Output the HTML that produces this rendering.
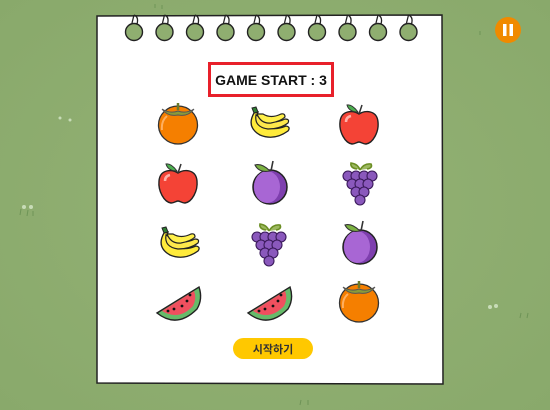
<!DOCTYPE html>
<html><head><meta charset="utf-8"><style>
html,body{margin:0;padding:0;width:550px;height:410px;overflow:hidden;background:#8fae70}
svg{display:block}
</style></head><body>
<svg width="550" height="410" viewBox="0 0 550 410" xmlns="http://www.w3.org/2000/svg">
<defs>
<radialGradient id="bg" cx="0.5" cy="0.5" r="0.7"><stop offset="0" stop-color="#94b275"/><stop offset="1" stop-color="#89a96b"/></radialGradient>
<g id="pers">
 <ellipse cx="0" cy="3" rx="19.5" ry="19" fill="#f57f00" stroke="#333" stroke-width="1.3"/>
 <path d="M-11,-6 q-6,5 -5,14" stroke="#ffb060" stroke-width="2" fill="none"/>
 <path d="M-16,-13 q8,5 16,2 q8,3 16,-2 q-6,8 -16,6 q-10,2 -16,-6z" fill="#8a9a3a" stroke="#555" stroke-width="1"/>
 <path d="M0,-12 v-7" stroke="#6a7a2a" stroke-width="2.5"/>
</g>
<g id="apple">
 <path d="M0,-10 c-6,-4 -18,-4 -19,8 c-1,10 5,21 12,22 c3,0 5,-2 7,-2 c2,0 4,2 7,2 c7,-1 13,-12 12,-22 c-1,-12 -13,-12 -19,-8z" fill="#f44336" stroke="#222" stroke-width="1.4"/>
 <path d="M-13,-2 q0,-5 5,-6" stroke="#ffb0a8" stroke-width="2.5" fill="none"/>
 <path d="M0,-10 l3,-9" stroke="#333" stroke-width="1.5"/>
 <path d="M-1,-12 q-6,-8 -11,-7 q2,7 11,7z" fill="#4caf50" stroke="#333" stroke-width="1"/>
</g>
<g id="banana">
 <path d="M-14,-10 q-8,14 6,22 q14,6 28,-4 q3,-4 -2,-5 q-14,6 -24,-2 q-6,-5 -4,-12z" fill="#ffeb3b" stroke="#222" stroke-width="1.3"/>
 <path d="M-12,-8 q-2,12 12,14 q12,0 20,-6 q2,-4 -3,-4 q-12,6 -22,0 z" fill="#fde74c" stroke="#222" stroke-width="1.2"/>
 <path d="M-11,-9 q4,10 14,9 q10,-2 14,-6 q0,-4 -4,-3 q-10,5 -18,0z" fill="#fff04a" stroke="#222" stroke-width="1.2"/>
 <path d="M-14,-10 l-2,-5 l4,-1 l2,5z" fill="#2e7d32" stroke="#222" stroke-width="1"/>
</g>
<g id="plum">
 <ellipse cx="0" cy="4" rx="17" ry="17" fill="#7e3fae" stroke="#222" stroke-width="1.5"/>
 <ellipse cx="-3" cy="4" rx="13" ry="16" fill="#a866d4"/>
 <path d="M1,-12 l2,-10" stroke="#333" stroke-width="1.6"/>
 <path d="M0,-12 q-8,-8 -15,-6 q4,8 15,6z" fill="#7cb342" stroke="#333" stroke-width="1.1"/>
</g>
<g id="grape">
 <path d="M0,-14 q-2,-6 -9,-7 q-1,5 6,6 M0,-14 q4,-7 11,-6 q2,4 -4,5" stroke="#6b8e23" stroke-width="1.6" fill="#9cb860"/>
 <g fill="#8a58bc" stroke="#3a1a5a" stroke-width="1.1">
 <circle cx="-12" cy="-8" r="5"/><circle cx="-4" cy="-8" r="5"/><circle cx="4" cy="-8" r="5"/><circle cx="12" cy="-8" r="5"/>
 <circle cx="-8" cy="0" r="5"/><circle cx="0" cy="0" r="5"/><circle cx="8" cy="0" r="5"/>
 <circle cx="-4" cy="8" r="5"/><circle cx="4" cy="8" r="5"/>
 <circle cx="0" cy="16" r="5"/>
 </g>
</g>
<g id="melon">
 <path d="M-21,10 q20,16 40,-4 q6,-10 2,-22 z" fill="#66bb6a" stroke="#222" stroke-width="1.4"/>
 <path d="M-16,8 q17,10 31,-5 q4,-8 1,-15 z" fill="#f0505f"/>
 <g fill="#111"><circle cx="-4" cy="6" r="1.4"/><circle cx="4" cy="3" r="1.4"/><circle cx="9" cy="-2" r="1.4"/><circle cx="12" cy="-8" r="1.4"/><circle cx="-10" cy="8" r="1.4"/></g>
</g>
<g id="ring">
 <path d="M0,-17 q-1,4 -2,8" stroke="#222" stroke-width="1.3" fill="none"/>
 <circle cx="0" cy="0" r="8.5" fill="#8fae70" stroke="#222" stroke-width="1.4"/>
 <path d="M0,-17 q5,2 3,9" stroke="#222" stroke-width="1.3" fill="none"/>
</g>
</defs>
<rect width="550" height="410" fill="url(#bg)"/>
<g stroke="#6e9457" stroke-width="1"><path d="M20,215 l1,-6 M27,216 l1,-6 M33,216 l0,-5 M480,35 l0,-4 M520,318 l1,-5 M527,318 l1,-5 M300,405 l1,-5 M308,405 l0,-5 M155,8 l0,-4 M162,9 l0,-4"/></g>
<g fill="#c8dcb8"><circle cx="24" cy="207" r="2"/><circle cx="31" cy="207" r="2"/><circle cx="490" cy="307" r="2"/><circle cx="496" cy="306" r="2"/><circle cx="60" cy="118" r="1.5"/><circle cx="70" cy="120" r="1.5"/></g>
<path d="M97,16 L442,15 L443,384 L97,383 Z" fill="#fff" stroke="#222" stroke-width="1.5"/>
<use href="#ring" x="134" y="32"/><use href="#ring" x="164.5" y="32"/><use href="#ring" x="195" y="32"/><use href="#ring" x="225.5" y="32"/><use href="#ring" x="256" y="32"/><use href="#ring" x="286.5" y="32"/><use href="#ring" x="317" y="32"/><use href="#ring" x="347.5" y="32"/><use href="#ring" x="378" y="32"/><use href="#ring" x="408.5" y="32"/>
<rect x="209.5" y="63.5" width="123" height="32" fill="#fff" stroke="#e8202a" stroke-width="3"/>
<text x="271" y="85" text-anchor="middle" font-family="Liberation Sans, sans-serif" font-weight="bold" font-size="14" fill="#111">GAME START : 3</text>
<use href="#pers" x="178" y="122"/>
<use href="#banana" x="268" y="123"/>
<use href="#apple" x="359" y="124"/>
<use href="#apple" x="178" y="183"/>
<use href="#plum" x="270" y="183"/>
<use href="#grape" x="360" y="184"/>
<use href="#banana" x="178" y="243"/>
<use href="#grape" x="269" y="245"/>
<use href="#plum" x="360" y="243"/>
<use href="#melon" x="178" y="303"/>
<use href="#melon" x="269" y="303"/>
<use href="#pers" x="359" y="300"/>
<rect x="233" y="338" width="80" height="21" rx="10.5" fill="#ffc800"/>
<text x="273" y="353" text-anchor="middle" font-family="Liberation Sans, 'Noto Sans CJK KR', sans-serif" font-weight="bold" font-size="11" fill="#333">시작하기</text>
<circle cx="508" cy="30" r="13" fill="#f08a00"/>
<rect x="503" y="24" width="3.5" height="12" fill="#fff"/><rect x="509.5" y="24" width="3.5" height="12" fill="#fff"/>
</svg>
</body></html>
